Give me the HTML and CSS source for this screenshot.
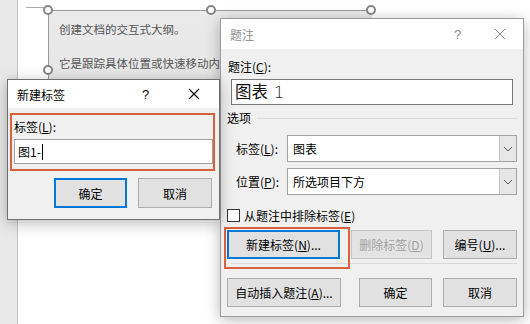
FILE: index.html
```html
<!DOCTYPE html>
<html lang="zh">
<head>
<meta charset="utf-8">
<link rel="stylesheet" href="styles.css">
</head>
<body>
<div class="desk">
  <div class="gutter"></div>
  <div class="page">
    <div class="margin-mark"></div>
    <div class="textbox">
      <p class="tb-line">创建文档的交互式大纲。</p>
      <p class="tb-line">它是跟踪具体位置或快速移动内</p>
    </div>
    <span class="handle h-tl"></span>
    <span class="handle h-tm"></span>
    <span class="handle h-tr"></span>
    <span class="handle h-ml"></span>
  </div>

  <!-- 题注 dialog -->
  <div class="dlg caption-dlg">
    <div class="titlebar inactive">
      <span class="title">题注</span>
      <span class="tb-q">?</span>
      <svg class="tb-x" width="12" height="12" viewBox="0 0 12 12"><path d="M1 1L11 11M11 1L1 11" stroke="currentColor" stroke-width="1" fill="none"/></svg>
    </div>
    <div class="body cbody">
      <div class="lbl">题注(<u>C</u>):</div>
      <div class="bigbox">图表 <span class="num">1</span></div>
      <div class="group"><span>选项</span><span class="gline"></span></div>
      <div class="row">
        <span class="rlbl">标签(<u>L</u>):</span>
        <div class="select"><span class="sval">图表</span><span class="sbtn"><svg width="10" height="6" viewBox="0 0 10 6"><path d="M1 1L5 5L9 1" stroke="#555" fill="none" stroke-width="1"/></svg></span></div>
      </div>
      <div class="row r2">
        <span class="rlbl">位置(<u>P</u>):</span>
        <div class="select"><span class="sval">所选项目下方</span><span class="sbtn"><svg width="10" height="6" viewBox="0 0 10 6"><path d="M1 1L5 5L9 1" stroke="#555" fill="none" stroke-width="1"/></svg></span></div>
      </div>
      <div class="check"><span class="cbox"></span><span>从题注中排除标签(<u>E</u>)</span></div>
      <div class="btnrow b1">
        <button class="btn focus w113">新建标签(<u>N</u>)...</button>
        <button class="btn disabled w81">删除标签(<u>D</u>)</button>
        <button class="btn w74">编号(<u>U</u>)...</button>
      </div>
      <div class="sep"></div>
      <div class="btnrow b2">
        <button class="btn w114">自动插入题注(<u>A</u>)...</button>
        <button class="btn w73">确定</button>
        <button class="btn w74">取消</button>
      </div>
    </div>
    <div class="mark mark-new"></div>
  </div>

  <!-- 新建标签 dialog -->
  <div class="dlg newtag-dlg">
    <div class="titlebar">
      <span class="title">新建标签</span>
      <span class="tb-q">?</span>
      <svg class="tb-x" width="12" height="12" viewBox="0 0 12 12"><path d="M1 1L11 11M11 1L1 11" stroke="currentColor" stroke-width="1.1" fill="none"/></svg>
    </div>
    <div class="body nbody">
      <div class="lbl">标签(<u>L</u>):</div>
      <div class="nbox">图1-<span class="caret"></span></div>
      <div class="btnrow nb">
        <button class="btn focus w73">确定</button>
        <button class="btn w74">取消</button>
      </div>
    </div>
    <div class="mark mark-field"></div>
  </div>
</div>
</body>
</html>
```

FILE: styles.css
```css
* { box-sizing: border-box; }
html, body { margin: 0; padding: 0; }
body {
  width: 530px; height: 324px; overflow: hidden;
  font-family: "Noto Sans CJK SC", "Noto Sans", sans-serif;
  font-size: 12px; color: #000;
}
.desk { position: relative; width: 530px; height: 324px; display: flex; background: #fff; }
.gutter { width: 18px; height: 100%; background: #e9e9e9; border-right: 1px solid #c4c4c4; }
.page { position: relative; flex: 1; height: 100%; background: #fff; }

.margin-mark { position: absolute; left: 8px; top: 7px; width: 22px; height: 1px; background: #a9a9a9; }
.textbox {
  position: absolute; left: 30px; top: 10px; width: 324px; height: 130px;
  border-top: 1px solid #9a9a9a; border-left: 1px solid #9a9a9a;
  background: linear-gradient(#eaeaea, #e4e4e4);
  padding: 10px 0 0 10px;
}
.tb-line { margin: 0 0 18px; font-size: 11.5px; line-height: 16px; color: #555; white-space: nowrap; }
.handle { position: absolute; width: 10px; height: 10px; border-radius: 50%; background: #fff; border: 2px solid #858585; }
.h-tl { left: 25px; top: 5px; }
.h-tm { left: 188px; top: 5px; }
.h-tr { left: 348px; top: 5px; }
.h-ml { left: 25px; top: 65px; }

.dlg { position: absolute; background: #f0f0f0; box-shadow: 0 3px 14px rgba(0,0,0,0.28); }
.caption-dlg { left: 220px; top: 18px; width: 304px; height: 299px; border: 1px solid #9c9c9c; }
.newtag-dlg { left: 7px; top: 79px; width: 213px; height: 141px; border: 1px solid #6f6f6f; }

.titlebar { position: relative; background: #fff; display: flex; align-items: center; padding-left: 9px; }
.caption-dlg .titlebar { height: 30px; }
.newtag-dlg .titlebar { height: 28px; }
.title { flex: 1; font-size: 12px; }
.tb-q { font-family: "Liberation Sans", sans-serif; font-size: 13px; width: 40px; }
.tb-x { margin-right: 17px; }
.inactive { color: #8e8e8e; }
.newtag-dlg .tb-q { width: 46px; }
.newtag-dlg .tb-x { margin-right: 19px; }

.body { display: flex; flex-direction: column; }
.lbl { line-height: 14px; height: 14px; }
u { text-decoration: underline; text-underline-offset: 1px; }

.cbody { padding: 11px 6px 0 6px; }
.cbody .lbl { padding-left: 1px; }
.bigbox {
  margin: 5px 4px 0 4px; height: 26px; background: #fff; border: 1px solid #7a7a7a;
  font-size: 16.5px; line-height: 23px; padding-left: 3px; color: #111;
}
.num { font-family: "DejaVu Sans", sans-serif; font-weight: 300; margin-left: 2px; color: #222; }
.group { margin-top: 6px; height: 14px; line-height: 14px; display: flex; align-items: center; gap: 6px; }
.gline { flex: 1; height: 1px; background: #dcdcdc; }
.row { margin-top: 10px; display: flex; align-items: center; }
.r2 { margin-top: 6px; }
.rlbl { width: 60px; padding-left: 9px; }
.select { flex: 1; height: 27px; display: flex; background: #fff; border: 1px solid #a3a3a3; }
.sval { flex: 1; line-height: 25px; padding-left: 5px; }
.sbtn { width: 17px; background: #e6e6e6; border-left: 1px solid #c6c6c6; display: flex; align-items: center; justify-content: center; }
.check { margin-top: 13px; height: 14px; display: flex; align-items: center; gap: 4px; }
.cbox { width: 13px; height: 13px; border: 1px solid #333; background: #fff; }

.btnrow { display: flex; }
.b1 { margin-top: 8px; gap: 11px; }
.b2 { margin-top: 14px; gap: 18px; }
.b2 .btn:last-child { margin-left: -7px; }
.sep { margin-top: 4px; height: 1px; background: #d9d9d9; margin-left: 4px; }
.btn {
  font: inherit; font-size: 12px; color: #000; height: 29px; padding: 0;
  background: #e1e1e1; border: 1px solid #adadad; white-space: nowrap;
}
.btn.focus { border: 2px solid #0078d7; }
.btn.disabled { color: #a0a0a0; background: #e3e3e3; border-color: #c4c4c4; }
.w73 { width: 73px; } .w74 { width: 74px; } .w81 { width: 81px; } .w113 { width: 113px; } .w114 { width: 114px; }

.nbody { padding: 12px 6px 0 6px; }
.nbody .lbl { padding-left: 0; }
.nbox {
  margin-top: 5px; height: 25px; background: #fff; border: 1px solid #a0a0a0;
  line-height: 23px; padding-left: 3px; display: flex; align-items: center;
}
.caret { display: inline-block; width: 1px; height: 16px; background: #000; margin-left: 1px; }
.nb { margin-top: 14px; justify-content: flex-end; gap: 11px; padding-right: 1px; }
.nb .btn { height: 30px; }

.mark { position: absolute; border: 2px solid #d9623d; pointer-events: none; }
.mark-new { left: 3px; top: 208px; width: 126px; height: 42px; }
.mark-field { left: 2px; top: 33px; width: 205px; height: 58px; }
```
